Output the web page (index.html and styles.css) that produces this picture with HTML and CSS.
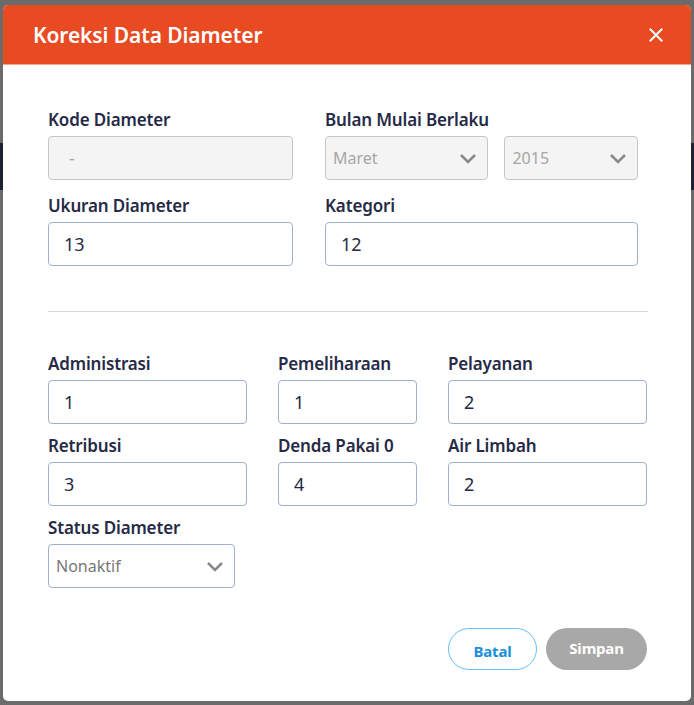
FILE: index.html
```html
<!DOCTYPE html>
<html lang="id">
<head>
<meta charset="utf-8">
<title>Koreksi Data Diameter</title>
<link rel="stylesheet" href="styles.css">
</head>
<body>
<div class="modal">
  <div class="modal-header">
    <h1 class="modal-title">Koreksi Data Diameter</h1>
    <button class="close" type="button" aria-label="Tutup">
      <svg width="14" height="14" viewBox="0 0 14 14"><path d="M1.5 1.5 L12.5 12.5 M12.5 1.5 L1.5 12.5" stroke="#fff" stroke-width="2" stroke-linecap="square" fill="none"/></svg>
    </button>
  </div>
  <div class="modal-body">
    <div class="grid-top">
      <div class="field">
        <label class="label">Kode Diameter</label>
        <div class="input disabled placeholder">-</div>
      </div>
      <div class="field">
        <label class="label">Bulan Mulai Berlaku</label>
        <div class="pair">
          <div class="input disabled select muted w-month"><span>Maret</span><svg class="chev" width="18" height="11" viewBox="0 0 18 11"><path d="M2 2 L9 9 L16 2" stroke="#8a8a8a" stroke-width="2.6" fill="none"/></svg></div>
          <div class="input disabled select muted w-year"><span>2015</span><svg class="chev" width="18" height="11" viewBox="0 0 18 11"><path d="M2 2 L9 9 L16 2" stroke="#8a8a8a" stroke-width="2.6" fill="none"/></svg></div>
        </div>
      </div>
      <div class="field">
        <label class="label">Ukuran Diameter</label>
        <div class="input">13</div>
      </div>
      <div class="field">
        <label class="label">Kategori</label>
        <div class="input">12</div>
      </div>
    </div>
    <hr class="divider">
    <div class="grid-bottom">
      <div class="field">
        <label class="label">Administrasi</label>
        <div class="input">1</div>
      </div>
      <div class="field">
        <label class="label">Pemeliharaan</label>
        <div class="input">1</div>
      </div>
      <div class="field">
        <label class="label">Pelayanan</label>
        <div class="input">2</div>
      </div>
      <div class="field">
        <label class="label">Retribusi</label>
        <div class="input">3</div>
      </div>
      <div class="field">
        <label class="label">Denda Pakai 0</label>
        <div class="input">4</div>
      </div>
      <div class="field">
        <label class="label">Air Limbah</label>
        <div class="input">2</div>
      </div>
      <div class="field">
        <label class="label">Status Diameter</label>
        <div class="input select status"><span>Nonaktif</span><svg class="chev" width="18" height="11" viewBox="0 0 18 11"><path d="M2 2 L9 9 L16 2" stroke="#8a8a8a" stroke-width="2.6" fill="none"/></svg></div>
      </div>
    </div>
  </div>
  <div class="modal-footer">
    <button class="btn btn-outline" type="button">Batal</button>
    <button class="btn btn-gray" type="button">Simpan</button>
  </div>
</div>
</body>
</html>
```

FILE: styles.css
```css
* { box-sizing: border-box; }
html, body { margin: 0; height: 100%; }
body {
  background:
    linear-gradient(to bottom, transparent 143px, #1d2130 143px, #1d2130 190px, transparent 190px),
    #6b6b6b;
  padding: 5px 3px 4px 3px;
  font-family: "Noto Sans", "Open Sans", sans-serif;
}
.modal {
  width: 688px;
  height: 696px;
  background: #fff;
  border-radius: 5px;
  overflow: hidden;
  display: flex;
  flex-direction: column;
}
.modal-header {
  height: 60px;
  flex: none;
  background: #e84b22;
  border-bottom: 1px solid #f2a48f;
  display: flex;
  align-items: center;
  justify-content: space-between;
  padding: 0 28px 0 30px;
}
.modal-title {
  margin: 0;
  color: #fff;
  font-size: 21px;
  font-weight: 600;
  letter-spacing: -0.1px;
}
.close {
  background: none;
  border: 0;
  padding: 0;
  width: 14px;
  height: 14px;
  display: flex;
  cursor: pointer;
}
.modal-body {
  padding: 45px 43px 0 45px;
  flex: 1;
}
.grid-top {
  display: grid;
  grid-template-columns: 245px 313px;
  column-gap: 32px;
  row-gap: 16px;
}
.grid-bottom {
  display: grid;
  grid-template-columns: 199px 139px 199px;
  column-gap: 31px;
  row-gap: 12px;
}
.field { display: flex; flex-direction: column; }
.label {
  color: #262a46;
  font-size: 17px;
  font-weight: 600;
  line-height: 20px;
  margin-bottom: 6px;
  letter-spacing: -0.15px;
}
.input {
  height: 44px;
  border: 1px solid #9fb0cf;
  border-radius: 4px;
  padding: 0 15px;
  display: flex;
  align-items: center;
  font-size: 18px;
  color: #262a42;
  background: #fff;
}
.input.disabled {
  background: #f4f4f4;
  border-color: #c6c6c6;
}
.placeholder { color: #a8a8a8; padding-left: 20px; }
.pair { display: flex; gap: 16px; }
.select {
  justify-content: space-between;
  padding: 0 10px 0 7px;
  color: #777;
  font-size: 16px;
}
.select.muted { color: #a6a6a6; }
.w-month { width: 164px; }
.w-year { width: 134px; }
.status { width: 187px; }
.chev { flex: none; }
.divider {
  border: 0;
  border-top: 1px solid #d9d9d9;
  margin: 45px 0 42px 0;
}
.modal-footer {
  flex: none;
  display: flex;
  justify-content: flex-end;
  align-items: flex-end;
  gap: 9px;
  padding: 0 44px 31px 0;
}
.btn {
  font-family: "Noto Sans", "Open Sans", sans-serif;
  font-size: 15px;
  font-weight: 700;
  height: 42px;
  border-radius: 21px;
  cursor: pointer;
  letter-spacing: -0.2px;
}
.btn-outline {
  width: 89px;
  background: #fff;
  border: 1.5px solid #62c2f7;
  color: #1b8fdb;
  padding-top: 4px;
}
.btn-gray {
  width: 101px;
  background: #a8a8a8;
  border: 0;
  color: #fff;
  padding-bottom: 3px;
}
```
